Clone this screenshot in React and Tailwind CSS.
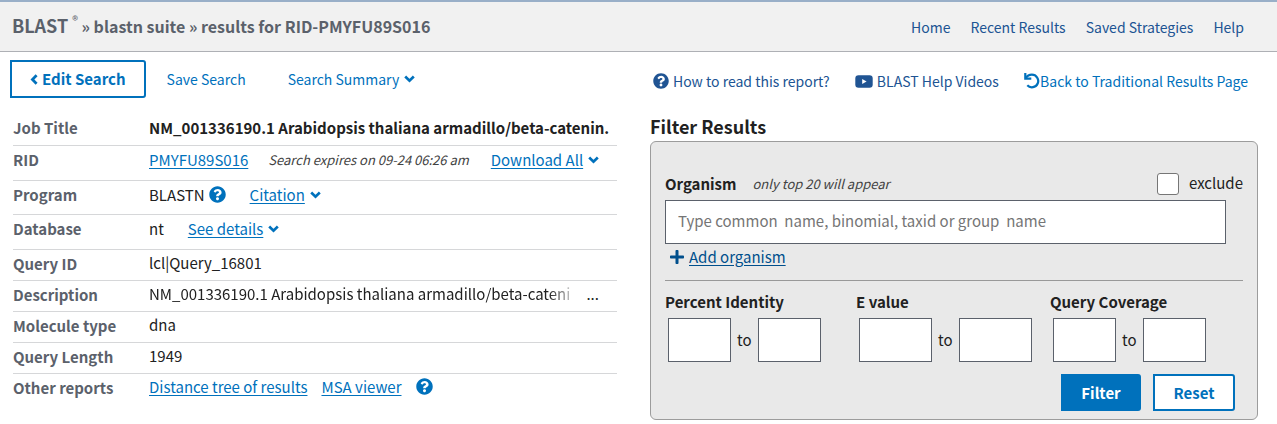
import { FaPlus, FaQuestionCircle } from "react-icons/fa";

const link = "text-[#0071bc]";
const underlined = "text-[#0071bc] underline underline-offset-2";

function ChevronDown() {
  return (
    <svg viewBox="0 0 11 8" className="h-2 w-[11px]" fill="none" stroke="currentColor" strokeWidth="2.7" aria-hidden="true">
      <path d="M1.2 1.6 5.5 5.7 9.8 1.6" />
    </svg>
  );
}

function ChevronLeft() {
  return (
    <svg viewBox="0 0 8 11" className="h-[11px] w-2" fill="none" stroke="currentColor" strokeWidth="2.7" aria-hidden="true">
      <path d="M6.6 1.2 2.4 5.5l4.2 4.3" />
    </svg>
  );
}

function VideoIcon() {
  return (
    <svg viewBox="0 0 18 13" className="h-[13px] w-[18px] shrink-0" aria-hidden="true">
      <rect x=".3" y=".3" width="17.4" height="12.4" rx="3.2" fill="currentColor" />
      <path d="M7.2 3.9v5.2l4.4-2.6z" fill="#fff" />
    </svg>
  );
}

function UndoIcon() {
  return (
    <svg viewBox="0 0 16 16" className="size-4 shrink-0" fill="none" stroke="currentColor" strokeWidth="2.2" aria-hidden="true">
      <path d="M1.3 0v5.7h6" />
      <path d="M1.6 5.3C3.2 2.8 5.4 1.7 7.9 1.7a6.3 6.3 0 1 1-4.6 10.6" />
    </svg>
  );
}

function MenuButton({ children, plain }) {
  return (
    <button type="button" className={`flex items-center gap-[5px] ${link}`}>
      <span className={plain ? "" : "underline underline-offset-2"}>{children}</span>
      <ChevronDown />
    </button>
  );
}

function HelpButton({ label }) {
  return (
    <button type="button" aria-label={label} className={link}>
      <FaQuestionCircle className="size-[17px]" />
    </button>
  );
}

function Row({ label, size = "h-[31px]", pad = "pt-px", last, children }) {
  return (
    <tr className={`${size} align-top ${last ? "" : "border-b border-[#d6d7d9]"}`}>
      <th scope="row" className="w-[136px] pt-[2px] text-left font-bold text-[#5b616b]">
        {label}
      </th>
      <td className={pad}>{children}</td>
    </tr>
  );
}

function Range({ title, width }) {
  return (
    <fieldset className="min-w-0">
      <legend className="mb-1 font-bold">{title}</legend>
      <div className="flex items-center gap-[6px] pl-[3px]">
        <input type="text" aria-label={`${title} from`} className={`h-11 border border-[#5b616b] bg-white px-2 ${width}`} />
        <span>to</span>
        <input type="text" aria-label={`${title} to`} className={`h-11 border border-[#5b616b] bg-white px-2 ${width}`} />
      </div>
    </fieldset>
  );
}

export default function App() {
  return (
    <div className="bg-white font-['Noto_Sans_CJK_SC','Noto_Sans',sans-serif] text-[15px] leading-6 text-[#212121]">
      <header className="flex h-[52px] items-center justify-between border-t-2 border-b border-t-[#99afc8] border-b-[#aeb0b5] bg-[#f1f1f1] pr-[33px] pl-3">
        <h1 className="pb-[2px] text-base leading-6 font-bold text-[#5b616b]">
          <span className="text-lg leading-6">BLAST</span>
          <sup className="-top-2 ml-1 text-xs font-normal">®</sup> » blastn suite » results for RID-PMYFU89S016
        </h1>
        <nav className="flex gap-5 text-sm leading-6 text-[#205493]">
          <a href="#home">Home</a>
          <a href="#recent">Recent Results</a>
          <a href="#saved">Saved Strategies</a>
          <a href="#help">Help</a>
        </nav>
      </header>

      <main className="grid grid-cols-[617fr_641fr] pt-2 pr-[19px]">
        <section className="min-w-0 pl-[10px]">
          <div className="flex items-center text-sm leading-6">
            <button type="button" className={`flex h-[38px] items-center gap-1 rounded-r-[3px] border-2 border-[#0071bc] px-[18px] text-[15px] font-bold ${link}`}>
              <ChevronLeft />
              Edit Search
            </button>
            <a href="#save" className={`ml-[21px] ${link}`}>Save Search</a>
            <div className="ml-[42px]">
              <MenuButton plain>Search Summary</MenuButton>
            </div>
          </div>

          <div className="mt-4 pl-[3px]">
            <table className="w-full table-fixed border-collapse">
              <tbody>
                <Row label="Job Title" pad="pt-[2px]">
                  <div className="overflow-hidden font-bold whitespace-nowrap">NM_001336190.1 Arabidopsis thaliana armadillo/beta-catenin.</div>
                </Row>
                <Row label="RID" size="h-[35px]" pad="pt-[2px]">
                  <div className="flex">
                    <a href="#rid" className={underlined}>PMYFU89S016</a>
                    <em className="mr-[22px] ml-5 text-[13px] leading-6 text-[#424242]">Search expires on 09-24 06:26 am</em>
                    <MenuButton>Download All</MenuButton>
                  </div>
                </Row>
                <Row label="Program" size="h-[34px]" pad="pt-[2px]">
                  <div className="flex items-center">
                    <span className="mr-1">BLASTN</span>
                    <HelpButton label="Program help" />
                    <div className="ml-6">
                      <MenuButton>Citation</MenuButton>
                    </div>
                  </div>
                </Row>
                <Row label="Database" size="h-[35px]" pad="pt-[2px]">
                  <div className="flex gap-6">
                    <span>nt</span>
                    <MenuButton>See details</MenuButton>
                  </div>
                </Row>
                <Row label="Query ID">lcl|Query_16801</Row>
                <Row label="Description">
                  <div className="flex gap-4">
                    <div className="mask-r-from-[95%] mask-r-to-[102%] whitespace-nowrap">
                      NM_001336190.1 Arabidopsis thaliana armadillo/beta-cateni
                    </div>
                    <span>...</span>
                  </div>
                </Row>
                <Row label="Molecule type">dna</Row>
                <Row label="Query Length">1949</Row>
                <Row label="Other reports" last>
                  <div className="flex items-center gap-[14px]">
                    <a href="#tree" className={underlined}>Distance tree of results</a>
                    <a href="#msa" className={underlined}>MSA viewer</a>
                    <HelpButton label="Other reports help" />
                  </div>
                </Row>
              </tbody>
            </table>
          </div>
        </section>

        <section className="min-w-0 pl-[33px]">
          <div className="flex items-center justify-between pt-[9px] pr-[10px] pl-[3px] text-sm leading-6 text-[#205493]">
            <a href="#how" className="flex items-center gap-1">
              <FaQuestionCircle className="size-4" aria-hidden="true" />
              How to read this report?
            </a>
            <a href="#videos" className="flex items-center gap-1">
              <VideoIcon />
              BLAST Help Videos
            </a>
            <a href="#traditional" className={`flex items-center ${link}`}>
              <UndoIcon />
              Back to Traditional Results Page
            </a>
          </div>

          <h2 className="mt-[21px] text-lg leading-6 font-bold">Filter Results</h2>

          <form className="mt-[3px] rounded-md border border-[#9c9c9c] bg-[#e9e9e9] px-[14px] pt-[30px] pb-2" onSubmit={(e) => e.preventDefault()}>
            <div className="flex items-center">
              <label htmlFor="organism" className="font-bold">Organism</label>
              <em className="ml-4 text-[13px] text-[#424242]">only top 20 will appear</em>
              <label className="ml-auto flex items-center gap-[10px]">
                <input type="checkbox" className="size-[22px] appearance-none rounded-[3px] border border-[#767676] bg-white" />
                <span className="pb-[2px] leading-[22px]">exclude</span>
              </label>
            </div>
            <div className="mt-1 pr-[17px]">
              <input id="organism" type="text" placeholder="Type common  name, binomial, taxid or group  name" className="h-11 w-full border border-[#5b616b] bg-white px-3 pb-[3px] placeholder:text-[#757575]" />
            </div>
            <button type="button" className="mt-px ml-1 flex items-center gap-1 text-[#004f8c]">
              <FaPlus className="size-4" aria-hidden="true" />
              <span className="underline underline-offset-2">Add organism</span>
            </button>

            <hr className="mt-[11px] mb-[9px] border-[#999]" />

            <div className="grid grid-cols-[191fr_194fr_193fr]">
              <Range title="Percent Identity" width="w-[63px]" />
              <Range title="E value" width="w-[73px]" />
              <Range title="Query Coverage" width="w-[63px]" />
            </div>

            <div className="mt-3 flex justify-end gap-3 pr-2 font-bold">
              <button type="submit" className="h-[37px] w-20 rounded-r-[3px] bg-[#0071bc] text-white">Filter</button>
              <button type="reset" className="h-[37px] w-[82px] rounded-r-[3px] border-2 border-[#0071bc] bg-white text-[#0071bc]">Reset</button>
            </div>
          </form>
        </section>
      </main>
    </div>
  );
}
